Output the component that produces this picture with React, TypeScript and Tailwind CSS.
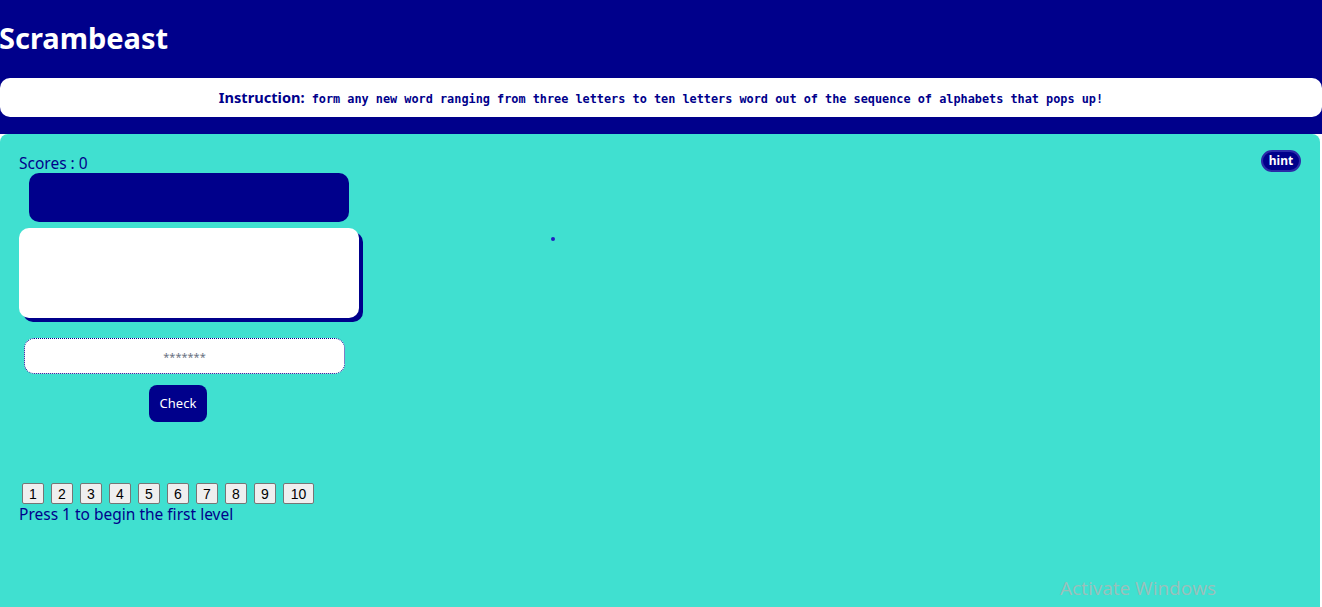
import { useState } from "react"

const levels = [1, 2, 3, 4, 5, 6, 7, 8, 9, 10]

export default function App() {
    const [guess, setGuess] = useState("")

    return (
        <div className="min-h-[607px] bg-white font-['Noto_Sans',sans-serif] text-[#00008b]">
            {/* header */}
            <div className="bg-[#00008b]">
                <h1 className="h-[78px] flex items-center text-[29px] font-bold text-white leading-none pb-1 -ml-[1px]">Scrambeast</h1>
                <div className="h-[39px] bg-white rounded-[10px] flex items-baseline justify-center gap-[7px] pt-[9px]">
                    <span className="text-[14.6px] font-bold leading-[20px]">Instruction:</span>
                    <span className="font-['DejaVu_Sans_Mono',monospace] text-[11.85px] font-bold">
                        form any new word ranging from three letters to ten letters word out of the sequence of alphabets that pops up!
                    </span>
                </div>
                <div className="h-[17px]" />
            </div>

            {/* game panel */}
            <div className="relative bg-[#40e0d0] rounded-t-[8px] mr-[2px] h-[473px] pt-[20px]">
                <button className="absolute left-[1261px] top-[16px] h-[22px] w-[40px] rounded-full bg-[#00008b] border-2 border-[#2a2aa8] text-white text-[12px] font-bold leading-none">
                    hint
                </button>
                <div className="absolute left-[551px] top-[103px] w-[4px] h-[4px] rounded-full bg-[#2020c0]" />

                <p className="ml-[19px] text-[15.5px] leading-[19px]">Scores : 0</p>
                <div className="ml-[29px] w-[320px] h-[49px] rounded-[10px] bg-[#00008b]" />
                <div className="ml-[19px] mt-[6px] w-[340px] h-[90px] rounded-[10px] bg-white shadow-[4px_4px_0_#00008b]" />
                <input
                    value={guess}
                    onChange={(e) => setGuess(e.target.value)}
                    placeholder="*******"
                    className="block ml-[24px] mt-[20px] w-[321px] h-[36px] rounded-[10px] bg-white border border-dotted border-[#00008b] text-center text-[11px] placeholder:text-gray-500 outline-none"
                />
                <div className="w-[356px] flex justify-center mt-[11px]">
                    <button className="h-[37px] w-[58px] rounded-[8px] bg-[#00008b] text-white text-[13px]">Check</button>
                </div>

                <div className="ml-[22px] mt-[61px] flex gap-[7px]">
                    {levels.map((n) => (
                        <button
                            key={n}
                            className={`h-[21px] ${n === 10 ? "w-[31px]" : "w-[22px]"} bg-[#efefef] border border-[#767676] rounded-[2px] text-black text-[14px] font-['Liberation_Sans',sans-serif] leading-none`}
                        >
                            {n}
                        </button>
                    ))}
                </div>
                <p className="ml-[19px] mt-[1px] text-[15.5px] leading-[19px]">Press 1 to begin the first level</p>

                <div className="absolute left-[1060px] bottom-[5px] text-[19px] text-[#9bbfba] font-['Open_Sans',sans-serif] pointer-events-none">
                    Activate Windows
                </div>
            </div>
        </div>
    )
}
